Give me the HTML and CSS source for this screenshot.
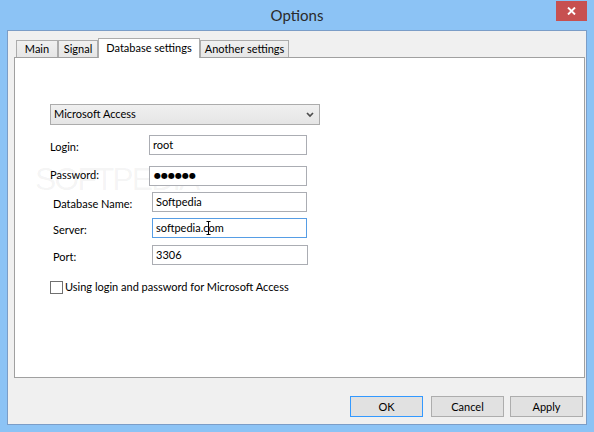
FILE: index.html
```html
<!DOCTYPE html>
<html>
<head>
<meta charset="utf-8">
<title>Options</title>
<link rel="stylesheet" href="styles.css">
</head>
<body>
<div class="window">
  <div class="titlebar">
    <div class="title">Options</div>
    <div class="close" aria-label="Close">
      <svg width="9" height="8" viewBox="0 0 9 8"><path d="M1 0.5 L8 7.5 M8 0.5 L1 7.5" stroke="#fff" stroke-width="1.9" fill="none"/></svg>
    </div>
  </div>
  <div class="client">
    <div class="tabstrip">
      <div class="tab t-main">Main</div>
      <div class="tab t-signal">Signal</div>
      <div class="tab selected t-db">Database settings</div>
      <div class="tab t-another">Another settings</div>
    </div>
    <div class="panel">
      <div class="watermark">SOFTPEDIA<span class="reg">®</span></div>
      <div class="combo">
        <span class="combo-text">Microsoft Access</span>
        <svg class="chev" width="8" height="6" viewBox="0 0 8 6"><path d="M1 1 L4 4 L7 1" stroke="#4d4d4d" stroke-width="1.7" fill="none"/></svg>
      </div>
      <div class="row r-login">
        <div class="label">Login:</div>
        <div class="textbox w158">root</div>
      </div>
      <div class="row r-pass">
        <div class="label">Password:</div>
        <div class="textbox w158 dots">●●●●●●</div>
      </div>
      <div class="row r-db indent">
        <div class="label">Database Name:</div>
        <div class="textbox w155">Softpedia</div>
      </div>
      <div class="row r-server indent">
        <div class="label">Server:</div>
        <div class="textbox w155 focused">softpedia.com<svg class="ibeam" width="5" height="14" viewBox="0 0 5 14"><path d="M0.5 0.5 H4.5 M2.5 0.5 V13.5 M0.5 13.5 H4.5" stroke="#000" stroke-width="1" fill="none"/></svg></div>
      </div>
      <div class="row r-port indent">
        <div class="label">Port:</div>
        <div class="textbox w156">3306</div>
      </div>
      <div class="check">
        <span class="checkbox"></span>
        <span class="check-text">Using login and password for Microsoft Access</span>
      </div>
    </div>
    <div class="buttons">
      <div class="btn default">OK</div>
      <div class="btn b-cancel">Cancel</div>
      <div class="btn b-apply">Apply</div>
    </div>
  </div>
</div>
</body>
</html>
```
FILE: styles.css
```css
* { box-sizing: border-box; }
html, body { margin: 0; padding: 0; }
body {
  font-family: Lato, "Open Sans", sans-serif;
  font-size: 11px;
  color: #000;
  background: #8cc3f5;
}
.window {
  width: 594px;
  height: 432px;
  background: #8cc3f5;
  display: flex;
  flex-direction: column;
  overflow: hidden;
}
.titlebar {
  height: 30px;
  flex: none;
  display: grid;
  grid-template-columns: 1fr auto 1fr;
}
.title {
  grid-column: 2;
  font-size: 15px;
  line-height: 30px;
  color: #2a2a2a;
}
.close {
  grid-column: 3;
  justify-self: end;
  align-self: start;
  width: 31px;
  height: 20px;
  margin: 1px 7px 0 0;
  background: #c75050;
  display: flex;
  align-items: center;
  justify-content: center;
}
.client {
  flex: none;
  height: 395px;
  margin: 0 7px;
  border: 1px solid #7b9dc7;
  background: #f0f0f0;
  padding: 0 1px 7px 6px;
  display: flex;
  flex-direction: column;
}
.tabstrip {
  height: 26px;
  flex: none;
  display: flex;
  align-items: flex-end;
  padding-left: 2px;
  position: relative;
  z-index: 2;
}
.tab {
  height: 17px;
  border: 1px solid #acacac;
  border-bottom: none;
  background: linear-gradient(#f0f0f0, #e6e6e6);
  text-align: center;
  line-height: 16px;
  white-space: nowrap;
}
.t-main { width: 42px; }
.t-signal { width: 40px; }
.t-db { width: 102px; }
.t-another { width: 89px; }
.tab.selected {
  height: 20px;
  margin-bottom: -1px;
  background: #fff;
  padding-top: 1px;
}
.panel {
  flex: none;
  height: 321px;
  border: 1px solid #a0a0a0;
  background: #fff;
  position: relative;
  padding: 46px 0 0 35px;
}
.watermark {
  position: absolute;
  left: 20px;
  top: 105px;
  font-family: "Liberation Sans", sans-serif;
  font-size: 32px;
  line-height: 32px;
  letter-spacing: -2px;
  color: rgba(110, 110, 110, 0.07);
  pointer-events: none;
  white-space: nowrap;
}
.watermark .reg {
  font-size: 10px;
  vertical-align: top;
  letter-spacing: 0;
  margin-left: 3px;
}
.combo {
  width: 270px;
  height: 21px;
  border: 1px solid #acacac;
  background: linear-gradient(#f0f0f0, #e5e5e5);
  display: flex;
  align-items: center;
  justify-content: space-between;
  padding: 0 5px 0 3px;
  margin-bottom: 10px;
}
.combo-text {
  align-self: flex-start;
  line-height: 16px;
  padding-top: 1px;
}
.row {
  display: flex;
  align-items: flex-start;
  height: 20px;
}
.indent { margin-left: 3px; }
.label {
  width: 99px;
  flex: none;
  line-height: 16px;
  white-space: nowrap;
}
.r-login { margin-bottom: 11px; }
.r-login .label { padding-top: 4px; }
.r-pass { margin-bottom: 6px; }
.r-pass .label { padding-top: 1px; }
.r-db { margin-bottom: 6px; }
.r-db .label { padding-top: 4px; }
.r-server { margin-bottom: 7px; }
.r-server .label { padding-top: 4px; }
.r-port { margin-bottom: 16px; }
.r-port .label { padding-top: 4px; }
.textbox {
  height: 20px;
  border: 1px solid #abadb3;
  background: #fff;
  padding: 0 3px;
  line-height: 17px;
  white-space: nowrap;
  position: relative;
}
.w158 { width: 158px; }
.w155 { width: 155px; }
.w156 { width: 156px; }
.textbox.focused { border-color: #569de5; }
.dots {
  font-family: "DejaVu Sans", sans-serif;
  font-size: 8px;
  letter-spacing: 0;
  line-height: 18px;
  padding-left: 4px;
}
.ibeam {
  position: absolute;
  left: 53px;
  top: 2px;
}
.check {
  display: flex;
  align-items: flex-start;
  height: 13px;
}
.checkbox {
  width: 13px;
  height: 13px;
  border: 1px solid #707070;
  background: #fff;
  flex: none;
}
.check-text {
  margin-left: 2px;
  line-height: 11px;
  white-space: nowrap;
}
.buttons {
  margin-top: 18px;
  display: flex;
  justify-content: flex-end;
  padding-right: 2px;
}
.btn {
  width: 73px;
  height: 21px;
  border: 1px solid #adadad;
  background: #e1e1e1;
  text-align: center;
  line-height: 19px;
}
.btn.default { border-color: #3399ff; }
.b-cancel { margin-left: 8px; }
.b-apply { margin-left: 6px; }
```
